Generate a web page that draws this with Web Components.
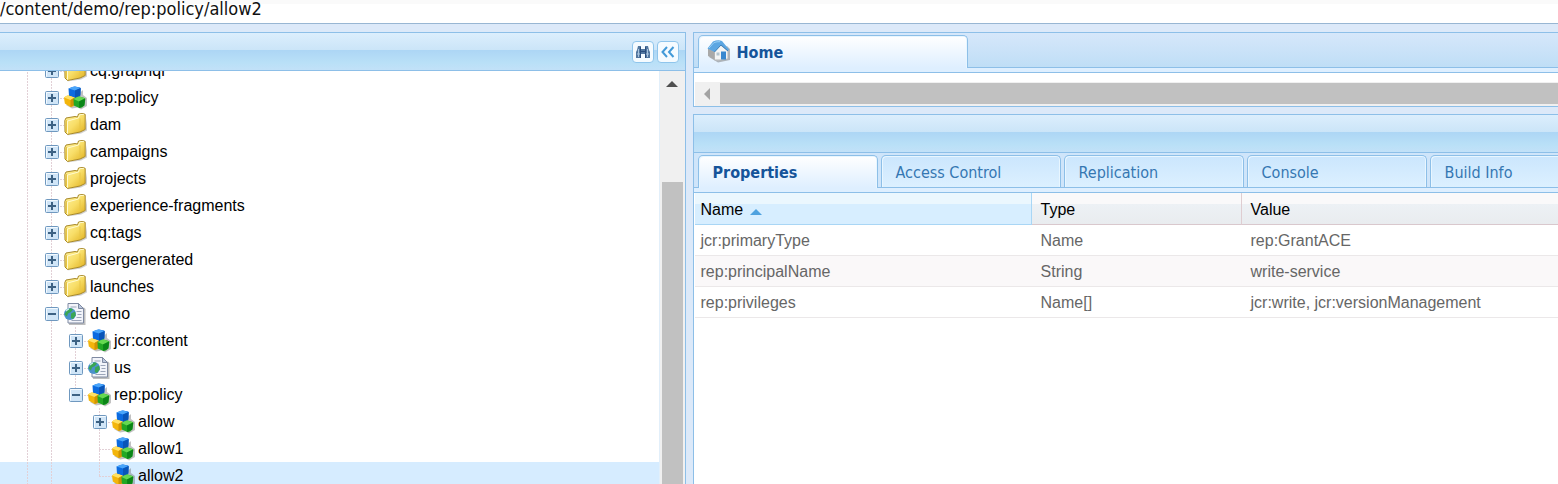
<!DOCTYPE html>
<html lang="en">
<head>
<meta charset="utf-8">
<title>CRXDE Lite</title>
<style>
  body {
    margin: 0;
    font-family: "Liberation Sans", Arial, sans-serif;
    --ui-font: "DejaVu Sans Condensed", Tahoma, sans-serif;
    --line: #8dbfe8;
  }
</style>
</head>
<body>
<crx-app></crx-app>

<script>
const ICONS = {
  folder: `
    <svg viewBox="0 0 24 24" width="24" height="24" aria-hidden="true">
      <defs><linearGradient id="f" x2="1" y2="1"><stop stop-color="#fff3a0"/><stop offset=".5" stop-color="#f8de68"/><stop offset="1" stop-color="#dfae1c"/></linearGradient></defs>
      <path d="M3 22.500l14-2 6-3V5l-2 12z" fill="#888" opacity=".4"/>
      <path d="M.8 7.500L2 5l9-1.500L13.500 4l1-3 4.500-.6 2.200 1V16.500L16 19 3.500 21.500 1 19z" fill="url(#f)" stroke="#a8892a"/>
      <path d="M3.500 20.500V8L14.500 5l1-3.200 4.500-.6" fill="none" stroke="#fffbd0"/>
      <path d="M2.300 7v12" stroke="#e3bc36"/>
      <path d="M16 5.500v12.500" stroke="#e9c646"/>
    </svg>`,
  cubes: `
    <svg viewBox="0 0 24 24" width="24" height="24" aria-hidden="true">
      <path d="M2 19l6 3.500 6-1 3 2 6-3.500v-8l-4-3V4z" fill="#666" opacity=".4"/>
      <path d="M4.500 2.500Q10 0 11 .5l5 1q.8.300.7 1l-.4 7q-1 2-5.300 2.500L5 10z" fill="#0c6be0"/>
      <path d="M4.500 2.500Q10 0 11 .5l5.700 1.500-5.700 2.500z" fill="#4aa5fa"/>
      <path d="M11 4.500l5.700-2.500-.4 7.500L11 12z" fill="#0a55b8"/>
      <path d="M0 11.500q3-2.500 4.500-2l6 2v7.500q-1 2-4 2L.8 17.500z" fill="#f3b50b"/>
      <path d="M0 11.500q3-2.500 4.500-2l6 2-4 2.500z" fill="#ffe165"/>
      <path d="M6.500 14l4-2.500v7.500l-4 2z" fill="#d09304"/>
      <path d="M9.500 13q4-3 6-2.500l5 1.500q1 .3.8 1.500l-1 6q-2 2.500-5 2.500L9.800 19.500z" fill="#22a824"/>
      <path d="M9.500 13q4-3 6-2.500l5.500 1.700-6 3.300z" fill="#66d851"/>
      <path d="M15 15.500l6.200-3-.9 7-5.100 2.500z" fill="#0b8518"/>
    </svg>`,
  page: `
    <svg viewBox="0 0 24 24" width="24" height="24" aria-hidden="true">
      <path d="M5 23h16.500V7l-2-2v16H5z" fill="#888" opacity=".55"/>
      <path d="M4 1.500h10.500l5 5v14.500H4z" fill="#f2f4fa" stroke="#7f8aa2"/>
      <path d="M14.500 1.500v5h5z" fill="#bcc7dc" stroke="#7f8aa2"/>
      <path d="M6.500 5h6M12.500 9.500h5M13.500 12.500h4M12.500 15.500h5M7.500 18.500h10" stroke="#9ba5b9"/>
      <circle cx="6" cy="12" r="6" fill="#4a91cc"/>
      <path d="M3 7.500l4-1.200 2 1.200-2 2.500-3 1.500-1 3-2.500-2zM7 11.500l4-2 .8 4-3 3.500-2-1z" fill="#3aa653"/>
      <path d="M2 9q1.500-2 3-2" fill="none" stroke="#c4e8e9" stroke-width="1.500"/>
    </svg>`,
  home: `
    <svg viewBox="0 0 24 24" width="24" height="24" aria-hidden="true">
      <path d="M2 17l9 5.500 12-2.500V9l-3-3z" fill="#666" opacity=".45"/>
      <path d="M1 8.500l7 3v8.500l-7-4z" fill="#a9a9a9"/>
      <path d="M7.500 11l6-6 7.500 6v8q-6 1.500-13.500 1z" fill="#f4f5f5" stroke="#b4b4b4"/>
      <path d="M.5 8.500L6 1.500Q11-.5 15 1l7 8.500-1 1.500-7-6L7.500 12z" fill="#5ca6e2"/>
      <path d="M2 8l5-5.500q3-1 6-.8" fill="none" stroke="#9bd0f5"/>
      <path d="M7.500 12L14 5l7 6" fill="none" stroke="#3c80bb"/>
      <path d="M14 11.500h5v8h-5z" fill="#3988cf"/>
      <path d="M9.500 12.500h3v3h-3z" fill="#b4c4cf"/>
    </svg>`,
  find: `
    <svg viewBox="0 0 20 20" width="20" height="20" aria-hidden="true">
      <path d="M5 4h3v3h4V4h3l1 4 1 2v6h-5v-4H8v4H3v-6l1-2z" fill="#53779f"/>
      <path d="M5.500 7v8m9-8v8M4 12h4m4 0h4" stroke="#a9c4de"/>
      <path d="M7.500 5v11m5-11v11M8 9.500h4" stroke="#2a4d7c"/>
    </svg>`,
  collapse: `
    <svg viewBox="0 0 20 20" width="20" height="20" aria-hidden="true">
      <path d="M9 5L4.500 10 9 15M15.500 5L11 10l4.500 5" fill="none" stroke="#439ad8" stroke-width="2"/>
    </svg>`,
};

class PathBar extends HTMLElement {
  constructor() {
    super();
    this.attachShadow({ mode: 'open' }).innerHTML = `
      <style>
        :host { display: block; border-bottom: 1px solid #98b6d3; background: linear-gradient(#fafafa 4px, #fff 4px); }
        input {
          display: block;
          width: 100%;
          height: 23px;
          box-sizing: border-box;
          border: 0;
          padding: 0 0 6px;
          outline: 0;
          background: none;
          color: #111;
          font: 18px/17px var(--ui-font);
        }
      </style>
      <input type="text" aria-label="Path" value="${this.getAttribute('path')}">
    `;
  }
}
customElements.define('path-bar', PathBar);

class ScrollBar extends HTMLElement {
  constructor() {
    super();
    this.attachShadow({ mode: 'open' }).innerHTML = `
      <style>
        :host { display: flex; flex-direction: column; width: 25px; flex: none; background: #f0f0f0; }
        .arrow { height: 25px; display: grid; place-items: center; }
        .thumb { flex: 1; background: #c1c1c1; margin: 86px 2px 0; }
        svg { display: block; fill: #505050; }
        :host([horizontal]) { flex-direction: row; width: auto; height: 24px; }
        :host([horizontal]) .arrow { width: 25px; height: 24px; }
        :host([horizontal]) .thumb { margin: 1px 0 2px; }
        :host([horizontal]) svg { transform: rotate(-90deg); fill: #a3a3a3; }
      </style>
      <div class="arrow"><svg width="12" height="6" viewBox="0 0 12 6"><path d="M6 0l6 6H0z"/></svg></div>
      <div class="thumb"></div>
    `;
  }
}
customElements.define('scroll-bar', ScrollBar);

class CrxPanel extends HTMLElement {
  constructor() {
    super();
    this.attachShadow({ mode: 'open' }).innerHTML = `
      <style>
        :host {
          display: flex;
          flex-direction: column;
          min-width: 0;
          min-height: 0;
          box-sizing: border-box;
          border: 1px solid var(--line);
          border-right-width: var(--panel-right, 1px);
          background: #fff;
        }
        header {
          display: flex;
          justify-content: flex-end;
          align-items: center;
          gap: 3px;
          height: 37px;
          flex: none;
          padding-right: 6px;
          border-bottom: 1px solid var(--line);
          background: linear-gradient(#dceefd, #cbe5f8 46%, #add6f5 47%, #b9e0f7 80%, #c2e1f8);
        }
        :host([plain]) header { display: none; }
      </style>
      <header><slot name="tools"></slot></header>
      <slot></slot>
    `;
  }
}
customElements.define('crx-panel', CrxPanel);

class ToolButton extends HTMLElement {
  constructor() {
    super();
    this.attachShadow({ mode: 'open' }).innerHTML = `
      <style>
        :host { display: block; }
        button {
          display: grid;
          place-items: center;
          width: 22px;
          height: 22px;
          padding: 0;
          border: 1px solid #8fc5ec;
          border-radius: 4px;
          background: #f5fbff;
        }
      </style>
      <button type="button" aria-label="${this.getAttribute('label')}">${ICONS[this.getAttribute('icon')]}</button>
    `;
  }
}
customElements.define('tool-button', ToolButton);

class TreeNode extends HTMLElement {
  constructor() {
    super();
    this.attachShadow({ mode: 'open' });
  }

  connectedCallback() {
    // guides: "|" continues a parent's line, "." leaves the column empty
    const guides = [...this.getAttribute('guides')]
      .map((g) => `<i class="${g === '|' ? 'line' : ''}"></i>`).join('');
    const state = this.getAttribute('state');
    const join = this.hasAttribute('last') ? 'join last' : 'join';
    const expander = state === 'leaf' ? '' : `
      <button type="button" aria-label="${state === 'open' ? 'Collapse' : 'Expand'}">
        <svg viewBox="0 0 14 14" width="14" height="14">
          <rect x=".5" y=".5" width="13" height="13" rx="1" fill="#d0e5f7" stroke="#6f98bf"/>
          <path d="M1.500 12.500v-11h11" fill="none" stroke="#f4faff"/>
          <path d="M3 7h8${state === 'open' ? '' : 'M7 3v8'}" stroke="#3d6284" stroke-width="2"/>
        </svg>
      </button>`;
    this.shadowRoot.innerHTML = `
      <style>
        :host { display: flex; height: 27px; padding-left: 16px; color: #000; --dots: #e2d0d6 0 2px, #fff0 2px 3px; }
        :host([selected]) { background: #d6ecff; }
        i { display: flex; align-items: center; flex: none; width: 24px; box-sizing: border-box; }
        .line { background: repeating-linear-gradient(var(--dots)) 11px 0 / 1px 100% no-repeat; }
        .join {
          padding-left: 5px;
          background:
            repeating-linear-gradient(var(--dots)) 11px 0 / 1px 100% no-repeat,
            repeating-linear-gradient(90deg, var(--dots)) 11px 14px / 13px 1px no-repeat;
        }
        .last { background-size: 1px 14px, 13px 1px; }
        button { padding: 0; border: 0; background: none; }
        svg { display: block; }
        a {
          display: flex;
          align-items: center;
          gap: 2px;
          color: inherit;
          font-size: 16px;
          line-height: 27px;
          text-decoration: none;
          white-space: nowrap;
        }
      </style>
      ${guides}<i class="${join}">${expander}</i>
      <a href="#">${ICONS[this.getAttribute('icon')]}<span><slot></slot></span></a>
    `;
  }
}
customElements.define('tree-node', TreeNode);

class RepoTree extends HTMLElement {
  constructor() {
    super();
    this.attachShadow({ mode: 'open' }).innerHTML = `
      <style>
        :host { display: flex; flex: 1; min-height: 0; }
        .nodes { flex: 1; overflow: hidden; border-right: 1px solid #e2effa; }
        .nodes::after { content: ""; display: block; height: 27px; }
      </style>
      <div class="nodes"><slot></slot></div>
      <scroll-bar></scroll-bar>
    `;
  }

  connectedCallback() {
    this.shadowRoot.querySelector('.nodes').scrollTop = Number(this.getAttribute('scroll'));
  }
}

class TabStrip extends HTMLElement {
  constructor() {
    super();
    const tabs = this.getAttribute('tabs').split('|');
    const icon = this.getAttribute('icon');
    this.attachShadow({ mode: 'open' }).innerHTML = `
      <style>
        :host { display: block; flex: none; }
        .bar {
          display: flex;
          gap: 3px;
          height: 35px;
          box-sizing: border-box;
          padding: 2px 0 0 4px;
          border-bottom: 1px solid var(--line);
          background: var(--bar, linear-gradient(#d6e7fa, #bfdef6));
        }
        .edge { height: 4px; background: #deefff; border-bottom: 1px solid var(--line); }
        button {
          display: flex;
          align-items: center;
          gap: 6px;
          flex: none;
          width: 180px;
          box-sizing: border-box;
          padding: 1px 14px 0;
          border: 1px solid var(--line);
          border-bottom: 0;
          border-radius: 5px 5px 0 0;
          background: linear-gradient(#cbe6fd, #dcf0ff);
          box-shadow: inset 1px 1px #e8f6ff, inset -1px 0 #e8f6ff;
          color: #3577b2;
          font: 16px var(--ui-font);
        }
        :host([wide]) button { width: 270px; padding: 0 8px; }
        [aria-selected=true] {
          margin-bottom: -1px;
          background: linear-gradient(#fff, #deefff);
          color: #15549a;
          font-weight: bold;
        }
        svg { display: block; }
      </style>
      <div class="bar" role="tablist">
        ${tabs.map((t, i) => `<button type="button" role="tab" aria-selected="${i === 0}">${icon ? ICONS[icon] : ''}<span>${t}</span></button>`).join('')}
      </div>
      <div class="edge"></div>
    `;
  }
}
customElements.define('tab-strip', TabStrip);

class PropertyGrid extends HTMLElement {
  constructor() {
    super();
    const rows = [
      ['jcr:primaryType', 'Name', 'rep:GrantACE'],
      ['rep:principalName', 'String', 'write-service'],
      ['rep:privileges', 'Name[]', 'jcr:write, jcr:versionManagement'],
    ];
    this.attachShadow({ mode: 'open' }).innerHTML = `
      <style>
        :host { display: block; padding-left: 1px; }
        table { width: 100%; border-collapse: separate; border-spacing: 0; table-layout: fixed; font-size: 16px; line-height: 20px; }
        .name { width: 337px; }
        .type { width: 210px; }
        th, td { box-sizing: border-box; padding: 2px 0 0 9px; text-align: left; font-weight: normal; white-space: nowrap; }
        th:first-child, td:first-child { padding-left: 6px; }
        th {
          height: 32px;
          color: #000;
          border-right: 1px solid #dfcdd1;
          border-bottom: 1px solid #d9c8cd;
          background: linear-gradient(#faf9fa 11px, #edf1f5 11px, #e9ecef);
        }
        th:last-child { border-right: 0; }
        th[aria-sort] {
          border-color: #a9d6f5;
          background: linear-gradient(#ebf7fe 11px, #d7eeff 11px);
        }
        th svg { margin-left: 7px; }
        td { height: 31px; color: #666; border-bottom: 1px solid #ebe8e9; }
        tr:nth-child(even) td { background: #faf8f9; }
      </style>
      <table>
        <colgroup><col class="name"><col class="type"><col></colgroup>
        <thead>
          <tr>
            <th aria-sort="ascending">Name<svg width="12" height="6" viewBox="0 0 12 6"><path d="M6 0l6 6H0z" fill="#4fa2df"/></svg></th>
            <th>Type</th>
            <th>Value</th>
          </tr>
        </thead>
        <tbody>
          ${rows.map((r) => `<tr>${r.map((c) => `<td>${c}</td>`).join('')}</tr>`).join('')}
        </tbody>
      </table>
    `;
  }
}
customElements.define('property-grid', PropertyGrid);

class CrxApp extends HTMLElement {
  constructor() {
    super();
    this.attachShadow({ mode: 'open' }).innerHTML = `
      <style>
        :host { display: flex; flex-direction: column; height: 100vh; overflow: hidden; background: #dce9f9; }
        main { display: grid; grid-template-columns: 44% 1fr; gap: 7px; flex: 1; min-height: 0; padding-top: 8px; }
        .left { border-left: 0; border-bottom: 0; }
        .right { display: flex; flex-direction: column; gap: 7px; min-width: 0; --panel-right: 0; }
        .editor { flex: none; }
        .editor scroll-bar { margin: 9px 0 0 1px; }
        .details { flex: 1; border-bottom: 0; --bar: #cfe5fa; }
      </style>
      <path-bar path="/content/demo/rep:policy/allow2"></path-bar>
      <main>
        <crx-panel class="left">
          <tool-button slot="tools" icon="find" label="Find"></tool-button>
          <tool-button slot="tools" icon="collapse" label="Collapse"></tool-button>
          <repo-tree scroll="14">
            <tree-node guides="|" state="closed" icon="folder">cq:graphql</tree-node>
            <tree-node guides="|" state="closed" icon="cubes">rep:policy</tree-node>
            <tree-node guides="|" state="closed" icon="folder">dam</tree-node>
            <tree-node guides="|" state="closed" icon="folder">campaigns</tree-node>
            <tree-node guides="|" state="closed" icon="folder">projects</tree-node>
            <tree-node guides="|" state="closed" icon="folder">experience-fragments</tree-node>
            <tree-node guides="|" state="closed" icon="folder">cq:tags</tree-node>
            <tree-node guides="|" state="closed" icon="folder">usergenerated</tree-node>
            <tree-node guides="|" state="closed" icon="folder">launches</tree-node>
            <tree-node guides="|" state="open" icon="page">demo</tree-node>
            <tree-node guides="||" state="closed" icon="cubes">jcr:content</tree-node>
            <tree-node guides="||" state="closed" icon="page">us</tree-node>
            <tree-node guides="||" state="open" icon="cubes" last>rep:policy</tree-node>
            <tree-node guides="||." state="closed" icon="cubes">allow</tree-node>
            <tree-node guides="||." state="leaf" icon="cubes">allow1</tree-node>
            <tree-node guides="||." state="leaf" icon="cubes" last selected>allow2</tree-node>
          </repo-tree>
        </crx-panel>
        <div class="right">
          <crx-panel class="editor" plain>
            <tab-strip tabs="Home" icon="home" wide></tab-strip>
            <scroll-bar horizontal></scroll-bar>
          </crx-panel>
          <crx-panel class="details">
            <tab-strip tabs="Properties|Access Control|Replication|Console|Build Info"></tab-strip>
            <property-grid></property-grid>
          </crx-panel>
        </div>
      </main>
    `;
  }
}
customElements.define('crx-app', CrxApp);
// defined last, once its nodes have been laid out, so that scrollTop can be applied
customElements.define('repo-tree', RepoTree);
</script>
</body>
</html>
